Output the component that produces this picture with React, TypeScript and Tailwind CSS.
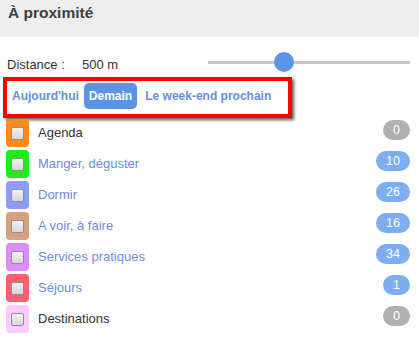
import React from 'react'

const categories = [
  { label: 'Agenda', color: 'bg-[#ff8b1f]', count: 0 },
  { label: 'Manger, déguster', color: 'bg-[#1fec1f]', count: 10 },
  { label: 'Dormir', color: 'bg-[#8c9cff]', count: 26 },
  { label: 'A voir, à faire', color: 'bg-[#d6a183]', count: 16 },
  { label: 'Services pratiques', color: 'bg-[#de8cff]', count: 34 },
  { label: 'Séjours', color: 'bg-[#ff5f6f]', count: 1 },
  { label: 'Destinations', color: 'bg-[#fdcbfd]', count: 0 },
]

export default function App() {
  return (
    <div className="w-[419px] h-[338px] bg-white overflow-hidden font-['Liberation_Sans',Arial,sans-serif]">
      <div className="h-[37px] bg-[#eeeeee] pt-[4px] pl-[8px]">
        <h1 className="text-[15.5px] font-bold text-[#404040] leading-[18px]">À proximité</h1>
      </div>

      <div className="mt-[13px] h-[24px] flex pl-[7px] pr-[9px]">
        <span className="w-[75px] pt-[7px] text-[13px] leading-[15px] text-[#333]">Distance :</span>
        <span className="pt-[7px] text-[13px] leading-[15px] text-[#333]">500 m</span>
        <div className="ml-auto w-[202px] h-[24px] relative">
          <div className="absolute left-0 right-0 top-[11px] h-[3px] bg-[#c6c6c6]" />
          <div className="absolute left-[66px] top-[2px] w-[20px] h-[20px] rounded-full bg-[#5b96e4]" />
        </div>
      </div>

      <div className="mt-[3px] ml-[3px] w-[289px] h-[41px] border-4 border-[#ff0000] shadow-[2px_2px_3px_rgba(0,0,0,0.65)] flex items-start gap-[3px] pt-[2px] text-[12px] font-bold">
        <button className="h-[26px] pl-[5px] pr-[2px] text-[#6a8de0]">Aujourd'hui</button>
        <button className="h-[26px] px-[5px] rounded-[5px] bg-[#5a95e3] text-white">Demain</button>
        <button className="h-[26px] px-[5px] text-[#6a8de0]">Le week-end prochain</button>
      </div>

      <ul className="mt-[1px] flex flex-col gap-[3px]">
        {categories.map((c) => (
          <li key={c.label} className="h-[28px] flex items-center">
            <div className={`ml-[6px] w-[23px] h-[28px] rounded-[4px] flex items-center justify-center ${c.color}`}>
              <div className="w-[13px] h-[13px] rounded-[2px] border border-[#8e8e8e] bg-gradient-to-b from-[#f2f2f2] to-[#d6d6d6]" />
            </div>
            <span
              className={`ml-[9px] text-[13px] ${c.count === 0 ? 'text-[#333]' : 'text-[#6a8de0]'}`}
            >
              {c.label}
            </span>
            <span
              className={`ml-auto mr-[9px] self-start mt-[1px] h-[20px] px-[10px] rounded-full flex items-center text-[12.5px] text-white ${
                c.count === 0 ? 'bg-[#b0b0b0]' : 'bg-[#7eaef2]'
              }`}
            >
              {c.count}
            </span>
          </li>
        ))}
      </ul>
    </div>
  )
}
